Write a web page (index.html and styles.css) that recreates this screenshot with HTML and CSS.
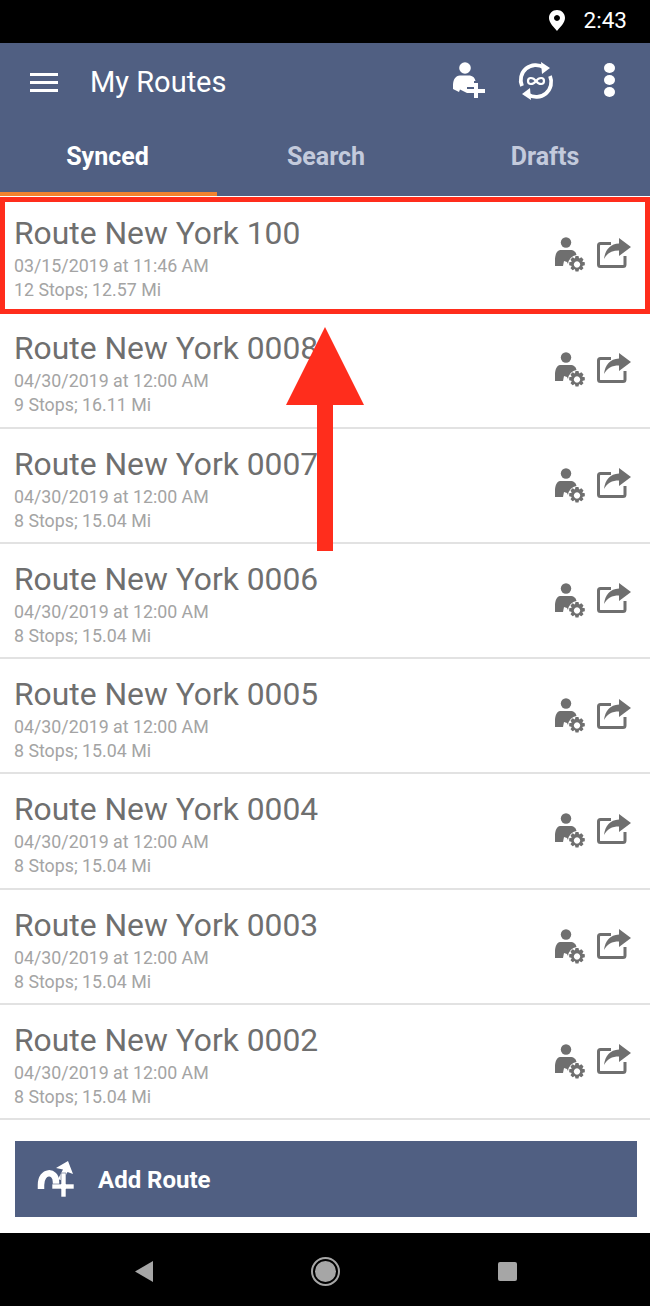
FILE: index.html
```html
<!DOCTYPE html>
<html lang="en">
<head>
<meta charset="utf-8">
<title>My Routes</title>
<link rel="stylesheet" href="styles.css">
</head>
<body>
<svg class="defs" width="0" height="0" aria-hidden="true">
  <symbol id="driver-gear" viewBox="0 0 31 37">
    <circle cx="11" cy="5.500" r="5.200" fill="#6f6f6f"/>
    <path d="M0 29 C-.5 22 0 14 5 13 H15 C19 13 21 15 21.500 18 A10 10 0 0 0 13 27 L12 25 L9 24 L8 29 Z" fill="#6f6f6f"/>
    <g transform="translate(-2.500 -1.500)">
      <path d="M23 20.500 h3 l.6 2.600 2.300-1.300 2.100 2.100-1.300 2.300 2.600.6 v3 l-2.600.6 1.300 2.300-2.100 2.100-2.300-1.300-.6 2.600 h-3 l-.6-2.600-2.300 1.300-2.100-2.100 1.300-2.300-2.600-.6 v-3 l2.600-.6-1.300-2.300 2.100-2.100 2.300 1.300 Z M24.500 25.800 a3.200 3.200 0 1 0 .01 0 Z" fill="#6f6f6f" fill-rule="evenodd"/>
    </g>
  </symbol>
  <symbol id="share-out" viewBox="0 0 34 30">
    <path d="M14 5.500 H3.500 A2 2 0 0 0 1.500 7.500 V26.500 A2 2 0 0 0 3.500 28.500 H26 A2 2 0 0 0 28 26.500 V18" fill="none" stroke="#6f6f6f" stroke-width="3"/>
    <path d="M22 0 L34 9 L22 18 V12.500 C15 12.500 10 15 7 21 C8 12 13 6 22 5.500 Z" fill="#6f6f6f"/>
  </symbol>
</svg>

<div class="status-bar">
  <svg class="pin" viewBox="0 0 16 21" aria-hidden="true">
    <path fill-rule="evenodd" d="M8 0 C3.500 0 0 3.500 0 8 C0 13 5 17 8 21 C11 17 16 13 16 8 C16 3.500 12.500 0 8 0 Z M8 5 A3 3 0 1 1 7.990 5 Z" fill="#fff"/>
  </svg>
  <span class="clock">2:43</span>
</div>

<header class="app-header">
  <div class="toolbar">
    <div class="menu-icon"><span></span><span></span><span></span></div>
    <h1 class="screen-title">My Routes</h1>
    <div class="toolbar-actions">
      <svg class="add-driver" viewBox="0 0 32 36" aria-hidden="true">
        <circle cx="12" cy="6" r="5.800" fill="#fff"/>
        <path d="M0 27 C-.5 20 1 14 7 13.500 H17 C20 14 22 16 22.500 19 H21 V25 H14 V31 L7 27.500 L6 30 Z" fill="#fff"/>
        <path d="M21 21 h4 v6 h7 v4 h-7 v5 h-4 v-5 h-7 v-4 h7 Z" fill="#fff"/>
      </svg>
      <svg class="sync-loop" viewBox="0 0 38 38" aria-hidden="true">
        <path d="M5 24 A15 15 0 0 1 27 5.500" fill="none" stroke="#fff" stroke-width="3.800"/>
        <path d="M33 14 A15 15 0 0 1 11 32.500" fill="none" stroke="#fff" stroke-width="3.800"/>
        <path d="M24 0 L33 6 L25 12 Z M14 38 L5 32 L13 26 Z" fill="#fff"/>
        <path d="M19 19 C16 15 11 15 11 19 C11 23 16 23 19 19 C22 15 27 15 27 19 C27 23 22 23 19 19 Z" fill="none" stroke="#fff" stroke-width="2.200"/>
      </svg>
      <div class="overflow-icon"><span></span><span></span><span></span></div>
    </div>
  </div>
  <nav class="tabs">
    <div class="tab tab-active">Synced</div>
    <div class="tab">Search</div>
    <div class="tab tab-last">Drafts</div>
  </nav>
</header>

<main class="route-list">
  <article class="route-row">
    <div class="route-text">
      <div class="route-name">Route New York 100</div>
      <div class="route-meta route-date">03/15/2019 at 11:46 AM</div>
      <div class="route-meta">12 Stops; 12.57 Mi</div>
    </div>
    <svg class="row-driver"><use href="#driver-gear"/></svg>
    <svg class="row-share"><use href="#share-out"/></svg>
  </article>
  <article class="route-row">
    <div class="route-text">
      <div class="route-name">Route New York 0008</div>
      <div class="route-meta route-date">04/30/2019 at 12:00 AM</div>
      <div class="route-meta">9 Stops; 16.11 Mi</div>
    </div>
    <svg class="row-driver"><use href="#driver-gear"/></svg>
    <svg class="row-share"><use href="#share-out"/></svg>
  </article>
  <article class="route-row">
    <div class="route-text">
      <div class="route-name">Route New York 0007</div>
      <div class="route-meta route-date">04/30/2019 at 12:00 AM</div>
      <div class="route-meta">8 Stops; 15.04 Mi</div>
    </div>
    <svg class="row-driver"><use href="#driver-gear"/></svg>
    <svg class="row-share"><use href="#share-out"/></svg>
  </article>
  <article class="route-row">
    <div class="route-text">
      <div class="route-name">Route New York 0006</div>
      <div class="route-meta route-date">04/30/2019 at 12:00 AM</div>
      <div class="route-meta">8 Stops; 15.04 Mi</div>
    </div>
    <svg class="row-driver"><use href="#driver-gear"/></svg>
    <svg class="row-share"><use href="#share-out"/></svg>
  </article>
  <article class="route-row">
    <div class="route-text">
      <div class="route-name">Route New York 0005</div>
      <div class="route-meta route-date">04/30/2019 at 12:00 AM</div>
      <div class="route-meta">8 Stops; 15.04 Mi</div>
    </div>
    <svg class="row-driver"><use href="#driver-gear"/></svg>
    <svg class="row-share"><use href="#share-out"/></svg>
  </article>
  <article class="route-row">
    <div class="route-text">
      <div class="route-name">Route New York 0004</div>
      <div class="route-meta route-date">04/30/2019 at 12:00 AM</div>
      <div class="route-meta">8 Stops; 15.04 Mi</div>
    </div>
    <svg class="row-driver"><use href="#driver-gear"/></svg>
    <svg class="row-share"><use href="#share-out"/></svg>
  </article>
  <article class="route-row">
    <div class="route-text">
      <div class="route-name">Route New York 0003</div>
      <div class="route-meta route-date">04/30/2019 at 12:00 AM</div>
      <div class="route-meta">8 Stops; 15.04 Mi</div>
    </div>
    <svg class="row-driver"><use href="#driver-gear"/></svg>
    <svg class="row-share"><use href="#share-out"/></svg>
  </article>
  <article class="route-row">
    <div class="route-text">
      <div class="route-name">Route New York 0002</div>
      <div class="route-meta route-date">04/30/2019 at 12:00 AM</div>
      <div class="route-meta">8 Stops; 15.04 Mi</div>
    </div>
    <svg class="row-driver"><use href="#driver-gear"/></svg>
    <svg class="row-share"><use href="#share-out"/></svg>
  </article>
</main>

<div class="action-area">
  <button class="add-route" type="button">
    <svg class="add-route-icon" viewBox="0 0 37 36" aria-hidden="true">
      <path d="M4 28 V24 C4 9 19 9 19 21 V25" fill="none" stroke="#fff" stroke-width="6.500"/>
      <path d="M31 0 L36 13 L30.500 11 L26 20 L21 18 L26 8.500 L19 7 Z" fill="#fff"/>
      <path d="M24 12 h5 v11 h8 v5 h-8 v8 h-5 v-8 h-9 v-5 h9 Z" fill="#fff" stroke="#505f82" stroke-width=".6"/>
    </svg>
    <span>Add Route</span>
  </button>
</div>

<footer class="nav-bar">
  <svg class="nav-back" viewBox="0 0 18 21" aria-hidden="true"><path d="M18 0 V21 L0 10.500 Z" fill="#a6a6a6"/></svg>
  <div class="nav-home"><span></span></div>
  <div class="nav-recent"></div>
</footer>

<div class="highlight-box"></div>
<svg class="callout-arrow" viewBox="0 0 78 224" aria-hidden="true">
  <path d="M39 0 L78 78 H47 V224 H31 V78 H0 Z" fill="#ff2d1c"/>
</svg>
</body>
</html>
```

FILE: styles.css
```css
* { box-sizing: border-box; }

html, body {
  margin: 0;
  padding: 0;
  background: #fff;
}

body {
  position: relative;
  width: 650px;
  height: 1306px;
  overflow: hidden;
  font-family: Roboto, "Liberation Sans", sans-serif;
  display: flex;
  flex-direction: column;
}

.defs { position: absolute; }

.status-bar {
  height: 43px;
  background: #000;
  display: flex;
  align-items: center;
  justify-content: flex-end;
  padding: 0 23px 3px 0;
  color: #fff;
}

.pin { width: 16px; height: 21px; margin-right: 19px; }

.clock { font-size: 22.500px; line-height: 24px; }

.app-header {
  height: 153px;
  background: #505f82;
  display: flex;
  flex-direction: column;
}

.toolbar {
  height: 78px;
  display: flex;
  align-items: center;
  padding-left: 30px;
}

.menu-icon {
  width: 28px;
  display: flex;
  flex-direction: column;
  gap: 5px;
}

.menu-icon span { height: 3px; background: #fff; }

.screen-title {
  margin: 0 0 0 32px;
  font-size: 29px;
  font-weight: 400;
  color: #fff;
}

.toolbar-actions {
  margin-left: auto;
  margin-bottom: 4px;
  display: flex;
  align-items: center;
  padding-right: 35px;
}

.add-driver { width: 32px; height: 36px; }

.sync-loop { width: 38px; height: 38px; margin: 2px 0 0 32px; }

.overflow-icon {
  margin-left: 49px;
  display: flex;
  flex-direction: column;
  gap: 2px;
}

.overflow-icon span {
  width: 11px;
  height: 10px;
  border-radius: 50%;
  background: #fff;
}

.tabs {
  flex: 1;
  display: grid;
  grid-template-columns: 217px 218px 215px;
}

.tab {
  display: flex;
  align-items: center;
  justify-content: center;
  padding-bottom: 0;
  border-bottom: 4px solid transparent;
  font-size: 25px;
  font-weight: 700;
  color: #c3cadc;
}

.tab-last { padding-left: 5px; }

.tab-active {
  padding-right: 2px;
  color: #fff;
  border-bottom-color: #f2822f;
}

.route-list {
  height: 922px;
  margin-top: 2px;
  display: grid;
  grid-template-rows: repeat(8, 1fr);
}

.route-row {
  display: flex;
  align-items: center;
  padding: 0 19px 0 14px;
  border-bottom: 2px solid #e2e2e2;
}

.route-text { flex: 1; padding-top: 8px; }

.route-name {
  font-size: 31.800px;
  line-height: 36px;
  color: #6f6f6f;
}

.route-meta {
  font-size: 17.800px;
  line-height: 24px;
  color: #a4a4a4;
}

.route-date { margin-top: 3px; }

.row-driver { width: 31px; height: 37px; margin: 2px 11px 0 0; }

.row-share { width: 34px; height: 30px; margin-bottom: 4px; }

.action-area {
  flex: 1;
  padding: 21px 13px 16px 15px;
}

.add-route {
  width: 100%;
  height: 76px;
  border: 0;
  background: #505f82;
  display: flex;
  align-items: center;
  padding: 2px 0 0 22px;
  font-family: inherit;
  font-size: 24px;
  font-weight: 700;
  color: #fff;
}

.add-route-icon { width: 37px; height: 36px; margin: 0 24px 2px 0; }

.nav-bar {
  height: 73px;
  background: #000;
  position: relative;
  display: grid;
  grid-template-columns: 1fr 1fr 1fr;
  padding: 3px 133px 0 135px;
  align-items: center;
}

.nav-back { width: 18px; height: 21px; }

.nav-home {
  width: 29px;
  height: 29px;
  justify-self: center;
  border: 2px solid #a6a6a6;
  border-radius: 50%;
  padding: 2px;
}

.nav-home span {
  display: block;
  width: 100%;
  height: 100%;
  border-radius: 50%;
  background: #a6a6a6;
}

.nav-recent {
  width: 19px;
  height: 19px;
  justify-self: end;
  background: #a6a6a6;
  border-radius: 2px;
}

.highlight-box {
  position: absolute;
  left: 0;
  top: 197px;
  width: 650px;
  height: 117px;
  border: 5px solid #ff2d1c;
}

.callout-arrow {
  position: absolute;
  left: 286px;
  top: 327px;
  width: 78px;
  height: 224px;
}
```
